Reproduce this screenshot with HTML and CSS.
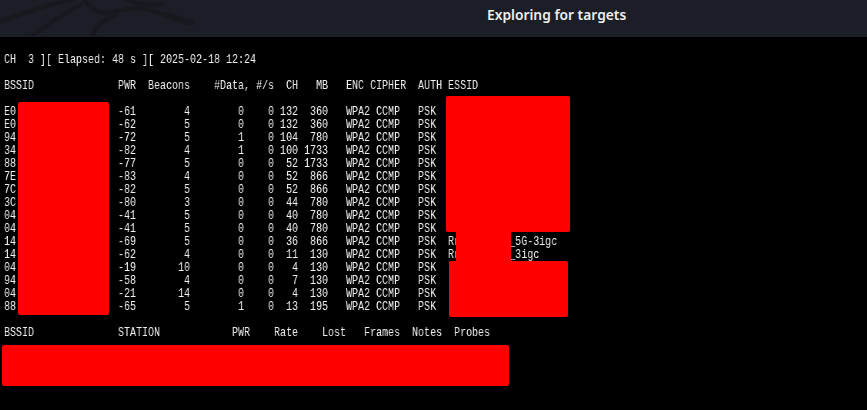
FILE: index.html
```html
<!DOCTYPE html>
<html lang="en">
<head>
<meta charset="utf-8">
<title>Exploring for targets</title>
<link rel="stylesheet" href="styles.css">
</head>
<body>
<header class="titlebar">
<svg class="dragon" width="220" height="36" viewBox="0 0 220 36" aria-hidden="true">
<path class="dragon-line" d="M0 22 C22 13 48 5 74 -1"/>
<path class="dragon-line" d="M32 36 C48 24 66 12 82 4"/>
<path class="dragon-line" d="M83 -2 C88 6 95 12 105 13 C118 12 130 6 145 9 C155 11 165 15 174 19"/>
<path class="dragon-line" d="M92 36 C96 26 104 18 118 15"/>
<path class="dragon-fill" d="M165 12 L195 20 L192 26 L172 21 Z"/>
<path class="dragon-line" d="M126 -1 C134 4 146 6 164 4"/>
</svg>
<h1 class="title">Exploring for targets</h1>
</header>
<main class="terminal">
<pre class="output">CH  3 ][ Elapsed: 48 s ][ 2025-02-18 12:24

BSSID              PWR  Beacons    #Data, #/s  CH   MB   ENC CIPHER  AUTH ESSID

E0                 -61        4        0    0 132  360   WPA2 CCMP   PSK
E0                 -62        5        0    0 132  360   WPA2 CCMP   PSK
94                 -72        5        1    0 104  780   WPA2 CCMP   PSK
34                 -82        4        1    0 100 1733   WPA2 CCMP   PSK
88                 -77        5        0    0  52 1733   WPA2 CCMP   PSK
7E                 -83        4        0    0  52  866   WPA2 CCMP   PSK
7C                 -82        5        0    0  52  866   WPA2 CCMP   PSK
3C                 -80        3        0    0  44  780   WPA2 CCMP   PSK
04                 -41        5        0    0  40  780   WPA2 CCMP   PSK
04                 -41        5        0    0  40  780   WPA2 CCMP   PSK
14                 -69        5        0    0  36  866   WPA2 CCMP   PSK  Rr        <span class="essid-tail">_5G-3igc</span>
14                 -62        4        0    0  11  130   WPA2 CCMP   PSK  Rr        <span class="essid-tail">_3igc</span>
04                 -19       10        0    0   4  130   WPA2 CCMP   PSK
94                 -58        4        0    0   7  130   WPA2 CCMP   PSK
04                 -21       14        0    0   4  130   WPA2 CCMP   PSK
88                 -65        5        1    0  13  195   WPA2 CCMP   PSK

BSSID              STATION            PWR    Rate    Lost   Frames  Notes  Probes</pre>
<div class="redact redact-bssid"></div>
<div class="redact redact-essid-top"></div>
<div class="redact redact-essid-mid"></div>
<div class="redact redact-essid-low"></div>
<div class="redact redact-stations"></div>
</main>
</body>
</html>
```
FILE: styles.css
```css
html, body {
  margin: 0;
  height: 100%;
  background: #000;
}

body {
  display: flex;
  flex-direction: column;
  overflow: hidden;
}

.titlebar {
  position: relative;
  flex: none;
  height: 37px;
  box-sizing: border-box;
  padding-left: 487px;
  display: flex;
  align-items: center;
  background: #1b1e26;
  overflow: hidden;
}

.dragon {
  position: absolute;
  left: 0;
  top: 0;
}

.dragon-line {
  fill: none;
  stroke: #17191f;
  stroke-width: 4;
}

.dragon-fill {
  fill: #17191f;
}

.title {
  margin: 0 0 7px;
  font: 600 13.8px/1 "Noto Sans", sans-serif;
  color: #eeeeee;
}

.terminal {
  position: relative;
  flex: 1;
  background: #000;
  padding: 16px 0 0 4px;
}

.output {
  margin: 0;
  font: 13px/13px "Liberation Mono", monospace;
  color: #f2f2f2;
  transform: scaleX(0.76923);
  transform-origin: left top;
  will-change: transform;
}

.essid-tail {
  margin-left: 1.5px;
}

.redact {
  position: absolute;
  background: #f00;
  border-radius: 2px;
}

.redact-bssid {
  left: 18px;
  top: 65px;
  width: 91px;
  height: 213px;
}

.redact-essid-top {
  left: 446px;
  top: 59px;
  width: 124px;
  height: 136px;
}

.redact-essid-mid {
  left: 456px;
  top: 193px;
  width: 55px;
  height: 33px;
  border-radius: 0;
}

.redact-essid-low {
  left: 449px;
  top: 224px;
  width: 119px;
  height: 56px;
}

.redact-stations {
  left: 2px;
  top: 308px;
  width: 507px;
  height: 41px;
}
```
